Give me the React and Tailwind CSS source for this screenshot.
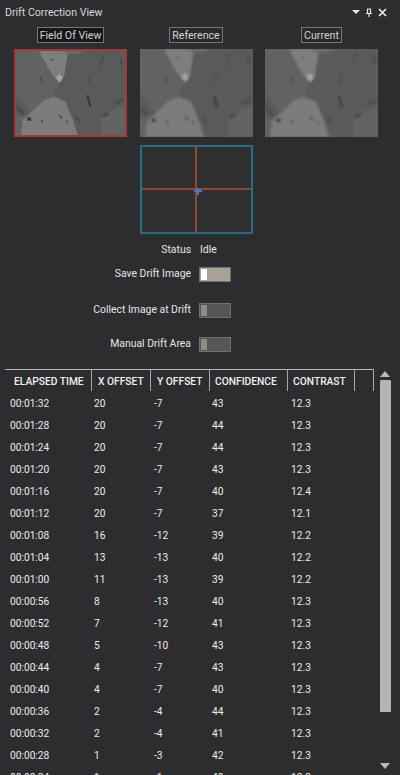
import React from "react";

const rows = [
  ["00:01:32","20","-7","43","12.3"],["00:01:28","20","-7","44","12.3"],["00:01:24","20","-7","44","12.3"],
  ["00:01:20","20","-7","43","12.3"],["00:01:16","20","-7","40","12.4"],["00:01:12","20","-7","37","12.1"],
  ["00:01:08","16","-12","39","12.2"],["00:01:04","13","-13","40","12.2"],["00:01:00","11","-13","39","12.2"],
  ["00:00:56","8","-13","40","12.3"],["00:00:52","7","-12","41","12.3"],["00:00:48","5","-10","43","12.3"],
  ["00:00:44","4","-7","43","12.3"],["00:00:40","4","-7","40","12.3"],["00:00:36","2","-4","44","12.3"],
  ["00:00:32","2","-4","41","12.3"],["00:00:28","1","-3","42","12.3"],["00:00:24","1","-1","42","12.3"],
];
const headers = [
  ["ELAPSED TIME","w-[87px] pl-[9px]"],["X OFFSET","w-[59px] pl-[6px]"],["Y OFFSET","w-[59px] pl-[6px]"],
  ["CONFIDENCE","w-[78px] pl-[5px]"],["CONTRAST","w-[67px] pl-[5px]"],
];

function Micrograph({ id }) {
  return (
    <svg viewBox="0 0 113 88" preserveAspectRatio="none" className="block w-full h-full">
      <defs><filter id={id} x="-5%" y="-5%" width="110%" height="110%"><feGaussianBlur stdDeviation="0.8" /></filter></defs>
      <rect width="113" height="88" fill="#626262" />
      <g filter={`url(#${id})`}>
        <path d="M52 0L113 0L113 88L64 88L59 72L51 53L39 46L44 36L50 26Z" fill="#5a5a5a" />
        <path d="M24 0L54 0L50 26L46 33L40 28L32 16Z" fill="#7e7e7e" />
        <path d="M41 28L45 24L49 28L45 33Z" fill="#a4a4a4" />
        <path d="M5 88L7 72L14 66L28 52L39 48L51 53L59 72L64 88Z" fill="#7c7c7c" />
        <path d="M0 44L6 52L14 64L6 70L0 66Z" fill="#5a5a5a" />
        <path d="M88 88L88 70L104 60L113 56L113 88Z" fill="#646464" />
        <path d="M73 46L75 47L78 58L76 58Z" fill="#303030" />
        <path d="M25 27L27 28L28 33L26 33Z" fill="#484848" />
        <path d="M11 70L15 69L16 73L12 73Z" fill="#3a3a3a" />
        <path d="M36 8L39 8L39 10L37 10ZM30 12L32 13L31 15Z" fill="#505050" />
        <path d="M88 8L91 3L92 5L88 15L85 22Z" fill="#505050" />
        <path d="M107 6L110 10L111 16L108 13Z" fill="#484848" />
        <path d="M47 0L70 0L65 3L54 4Z" fill="#6c6c6c" />
        <path d="M74 27L78 24L77 34L74 36Z" fill="#525252" />
        <path d="M89 67L94 64L97 67L91 70Z" fill="#4c4c4c" />
        <path d="M44 66L49 70L46 71ZM52 72L55 75L52 75ZM26 71L29 74L26 75Z" fill="#4e4e4e" />
        <path d="M0 56L9 65L6 67L0 60Z" fill="#4c4c4c" />
        <path d="M101 53L111 49L112 52L104 57Z" fill="#505050" />
        <path d="M62 66L68 74L66 76L61 70Z" fill="#4e4e4e" />
      </g>
    </svg>
  );
}

function Thumb({ label, selected, id }) {
  return (
    <div className="w-[113px] flex flex-col items-center">
      <div className={`h-[16px] px-[2px] pt-[2px] flex items-center border border-[#77777b] text-[10.6px] leading-none text-[#d4d4d4] ${selected ? "bg-[#17171a]" : "bg-[#2a2a2d]"}`}>{label}</div>
      <div className={`mt-[6px] w-[113px] h-[88px] box-border ${selected ? "border-2 border-[#a03a3e]" : ""}`}><Micrograph id={id} /></div>
    </div>
  );
}

function Toggle({ label, on, className }) {
  return (
    <div className={`flex items-center h-[16px] ${className}`}>
      <div className="w-[191px] pt-[1px] text-right text-[10.4px] text-[#e6e6e6] leading-none">{label}</div>
      <div className={`ml-[8px] w-[32px] h-[15px] border border-[#707070] p-[1px] flex ${on ? "bg-[#a8a396]" : "bg-[#565654]"}`}>
        <div className={`w-[6px] h-full ${on ? "bg-white" : "bg-[#8e8c84]"}`} />
      </div>
    </div>
  );
}

export default function App() {
  return (
    <div className="w-[400px] h-[775px] overflow-hidden bg-[#2d2d30] text-[#e8e8e8] font-['Roboto','Liberation_Sans',sans-serif] flex flex-col">
      <div className="h-[24px] shrink-0 flex items-center pl-[5px] pr-[13px] text-[#d8d8d8]">
        <span className="pt-[2px] text-[10.6px] leading-none">Drift Correction View</span>
        <div className="ml-auto flex items-center gap-[6px]">
          <svg width="8" height="4" viewBox="0 0 8 4"><path d="M0 0H8L4 4Z" fill="#e8e8e8" /></svg>
          <svg width="6" height="9" viewBox="0 0 6 9"><path d="M1 1H5M1.5 1V5.5M4.5 1V5.5M0 5.5H6M3 5.5V9" stroke="#e8e8e8" strokeWidth="1.2" fill="none" /></svg>
          <svg width="9" height="9" viewBox="0 0 9 9"><path d="M1 1L8 8M8 1L1 8" stroke="#f0f0f0" strokeWidth="1.6" /></svg>
        </div>
      </div>

      <div className="pl-[14px] mt-[3px] flex gap-[12.5px] shrink-0">
        <Thumb label="Field Of View" selected id="a" />
        <Thumb label="Reference" id="b" />
        <Thumb label="Current" id="c" />
      </div>

      <div className="ml-[140px] mt-[8px] relative w-[113px] h-[89px] shrink-0 border-2 border-[#2a6a84] bg-[#302f2f]">
        <div className="absolute left-[53px] top-0 bottom-0 w-[2px] bg-[#8c4a3c]" />
        <div className="absolute top-[41px] left-0 right-0 h-[2px] bg-[#8c4a3c]" />
        <svg className="absolute left-[52px] top-[40px]" width="8" height="8" viewBox="0 0 8 8"><path d="M3 1H5V3H8V5H5V8H3V5H0V3H3Z" fill="#4a78c8" /></svg>
      </div>

      <div className="mt-[8px] h-[16px] pt-[1px] flex items-center shrink-0 text-[10.4px] leading-none">
        <div className="w-[191px] text-right text-[#e6e6e6]">Status</div>
        <div className="ml-[9px] text-[#ece8d8]">Idle</div>
      </div>
      <Toggle label="Save Drift Image" on className="mt-[8px] shrink-0" />
      <Toggle label="Collect Image at Drift" className="mt-[20px] shrink-0" />
      <Toggle label="Manual Drift Area" className="mt-[18px] shrink-0" />

      <div className="mt-[17px] flex flex-1 min-h-0 pl-[5px]">
        <div className="w-[369px]">
          <div className="h-[22px] flex border-t border-[#b8b8b8] text-[10.25px] font-medium text-[#f0f0f0] leading-none">
            {headers.map(([h, w]) => (
              <div key={h} className={`${w} h-full pt-[4px] flex items-center border-r border-[#a8a8a8] whitespace-nowrap`}>{h}</div>
            ))}
            <div className="w-[19px] h-full border-r border-[#a8a8a8]" />
          </div>
          <div className="pt-[2px]">
            {rows.map((r) => (
              <div key={r[0]} className="h-[22px] flex items-center text-[10.2px] text-[#ececec] leading-none">
                <div className="w-[89px] pl-[5px]">{r[0]}</div>
                <div className="w-[60px]">{r[1]}</div>
                <div className="w-[58px]">{r[2]}</div>
                <div className="w-[79px]">{r[3]}</div>
                <div>{r[4]}</div>
              </div>
            ))}
          </div>
        </div>
        <div className="ml-[5px] w-[12px] flex flex-col items-center pt-[2px]">
          <svg width="10" height="6" viewBox="0 0 10 6"><path d="M5 0L10 6H0Z" fill="#b8b8b8" /></svg>
          <div className="mt-[3px] w-[11px] h-[332px] rounded-[1px] bg-[#b4b4b4]" />
          <svg className="mt-[51px]" width="10" height="6" viewBox="0 0 10 6"><path d="M0 0H10L5 6Z" fill="#b8b8b8" /></svg>
        </div>
      </div>
    </div>
  );
}
